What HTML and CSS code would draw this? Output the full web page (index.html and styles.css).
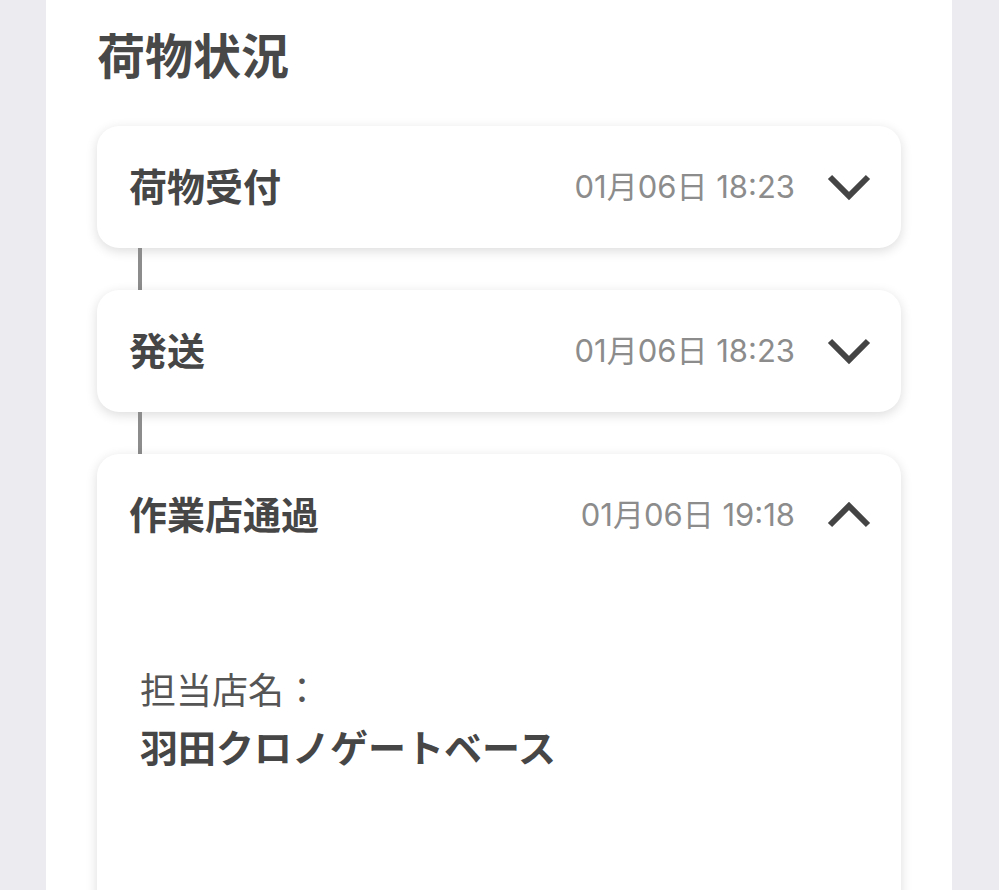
FILE: index.html
```html
<!DOCTYPE html>
<html lang="ja">
<head>
    <meta charset="UTF-8">
    <meta name="viewport" content="width=device-width, initial-scale=1.0">
    <title>荷物状況</title>
    <link rel="stylesheet" href="styles.css">
</head>
<body>
    <div class="panel">
        <h1>荷物状況</h1>
        <div class="timeline">
            <div class="step">
                <div class="step-head">
                    <span class="step-name">荷物受付</span>
                    <span class="step-date">01月06日 18:23</span>
                    <svg class="chevron" width="44" height="28" viewBox="0 0 44 28">
                        <polyline points="3,4 22,23 41,4" />
                    </svg>
                </div>
            </div>
            <div class="connector"></div>
            <div class="step">
                <div class="step-head">
                    <span class="step-name">発送</span>
                    <span class="step-date">01月06日 18:23</span>
                    <svg class="chevron" width="44" height="28" viewBox="0 0 44 28">
                        <polyline points="3,4 22,23 41,4" />
                    </svg>
                </div>
            </div>
            <div class="connector"></div>
            <div class="step open">
                <div class="step-head">
                    <span class="step-name">作業店通過</span>
                    <span class="step-date">01月06日 19:18</span>
                    <svg class="chevron" width="44" height="28" viewBox="0 0 44 28">
                        <polyline points="3,24 22,5 41,24" />
                    </svg>
                </div>
                <div class="step-body">
                    <div class="label">担当店名：</div>
                    <div class="value">羽田クロノゲートベース</div>
                </div>
            </div>
        </div>
    </div>
</body>
</html>
```

FILE: styles.css
```css
body {
    margin: 0;
    background-color: #ebebf0;
    font-family: "Noto Sans CJK JP", "Noto Sans", sans-serif;
    color: #444444;
    height: 890px;
    overflow: hidden;
}
.panel {
    margin: 0 47px 0 46px;
    background-color: #ffffff;
    padding: 21px 51px 0 51px;
    min-height: 890px;
    box-sizing: border-box;
}
h1 {
    margin: 0 0 40px 0;
    font-size: 48px;
    line-height: 65px;
    font-weight: 700;
    color: #484848;
}
.step {
    background-color: #ffffff;
    border-radius: 22px;
    box-shadow: 0 3px 12px rgba(0, 0, 0, 0.14);
}
.step-head {
    display: flex;
    align-items: center;
    height: 122px;
    padding: 0 30px 0 32px;
}
.step-name {
    flex: 1;
    font-size: 38px;
    line-height: 50px;
    padding-bottom: 4px;
    font-weight: 700;
    color: #464646;
}
.step-date {
    font-family: "Inter", "Noto Sans CJK JP", sans-serif;
    font-size: 31px;
    line-height: 40px;
    color: #8c8c8c;
    margin-right: 32px;
}
.chevron polyline {
    fill: none;
    stroke: #444444;
    stroke-width: 6;
}
.connector {
    width: 4px;
    height: 42px;
    margin-left: 41px;
    background-color: #8c8c8c;
}
.step.open {
    min-height: 480px;
}
.step-body {
    padding: 84px 0 0 43px;
}
.label {
    font-size: 36px;
    line-height: 56px;
    color: #555555;
}
.value {
    font-size: 38px;
    line-height: 60px;
    font-weight: 700;
    color: #464646;
}
```
